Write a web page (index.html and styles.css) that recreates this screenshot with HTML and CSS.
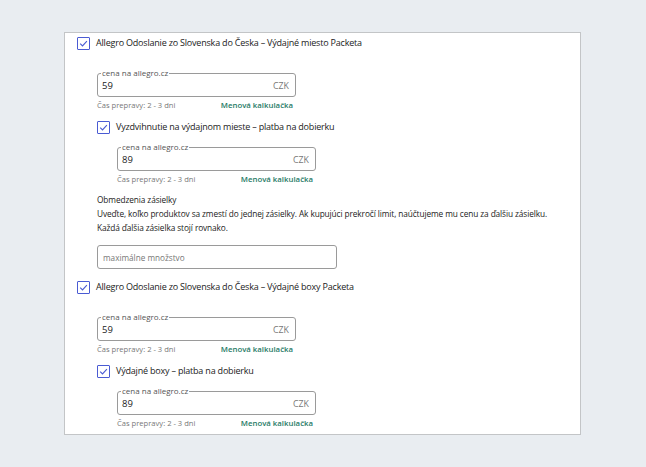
FILE: index.html
```html
<!DOCTYPE html>
<html lang="sk">
<head>
  <meta charset="UTF-8" />
  <title>Doprava</title>
  <link rel="stylesheet" href="styles.css">
</head>
<body>
  <div class="card">

    <label class="option">
      <span class="check"><svg viewBox="0 0 11 11"><path d="M2.2 5.6 L4.5 7.9 L8.9 3.1" /></svg></span>
      Allegro Odoslanie zo Slovenska do Česka – Výdajné miesto Packeta
    </label>
    <div class="indent">
      <div class="price first">
        <span class="legend">cena na allegro.cz</span>
        <span class="value">59</span>
        <span class="currency">CZK</span>
      </div>
      <div class="hint">
        <span>Čas prepravy: 2 - 3 dni</span>
        <a href="#">Menová kalkulačka</a>
      </div>

      <label class="option sub">
        <span class="check"><svg viewBox="0 0 11 11"><path d="M2.2 5.6 L4.5 7.9 L8.9 3.1" /></svg></span>
        Vyzdvihnutie na výdajnom mieste – platba na dobierku
      </label>
      <div class="indent">
        <div class="price">
          <span class="legend">cena na allegro.cz</span>
          <span class="value">89</span>
          <span class="currency">CZK</span>
        </div>
        <div class="hint">
          <span>Čas prepravy: 2 - 3 dni</span>
          <a href="#">Menová kalkulačka</a>
        </div>
      </div>

      <div class="limits">
        <p>Obmedzenia zásielky</p>
        <p>Uveďte, koľko produktov sa zmestí do jednej zásielky. Ak kupujúci prekročí limit, naúčtujeme mu cenu za ďalšiu zásielku.</p>
        <p>Každá ďalšia zásielka stojí rovnako.</p>
      </div>
      <input class="amount" type="text" placeholder="maximálne množstvo" />
    </div>

    <label class="option top-gap">
      <span class="check"><svg viewBox="0 0 11 11"><path d="M2.2 5.6 L4.5 7.9 L8.9 3.1" /></svg></span>
      Allegro Odoslanie zo Slovenska do Česka – Výdajné boxy Packeta
    </label>
    <div class="indent">
      <div class="price first">
        <span class="legend">cena na allegro.cz</span>
        <span class="value">59</span>
        <span class="currency">CZK</span>
      </div>
      <div class="hint">
        <span>Čas prepravy: 2 - 3 dni</span>
        <a href="#">Menová kalkulačka</a>
      </div>

      <label class="option sub">
        <span class="check"><svg viewBox="0 0 11 11"><path d="M2.2 5.6 L4.5 7.9 L8.9 3.1" /></svg></span>
        Výdajné boxy – platba na dobierku
      </label>
      <div class="indent">
        <div class="price">
          <span class="legend">cena na allegro.cz</span>
          <span class="value">89</span>
          <span class="currency">CZK</span>
        </div>
        <div class="hint">
          <span>Čas prepravy: 2 - 3 dni</span>
          <a href="#">Menová kalkulačka</a>
        </div>
      </div>
    </div>

  </div>
</body>
</html>
```

FILE: styles.css
```css
body {
  margin: 0;
  padding: 32px 0 0 64px;
  background-color: #e9edf1;
  font-family: 'Open Sans', sans-serif;
  color: #222;
  overflow: hidden;
}
.card {
  width: 503px;
  height: 398px;
  padding: 3px 0 0 12px;
  background-color: #fff;
  border: 1px solid #c3c5c7;
  overflow: hidden;
}
.option {
  display: flex;
  align-items: center;
  gap: 6px;
  height: 14px;
  font-size: 9px;
  letter-spacing: -0.2px;
  line-height: 14px;
  color: #222;
}
.check {
  width: 11px;
  height: 11px;
  border: 1px solid #4a5bd3;
  border-radius: 1px;
  flex: none;
}
.check svg {
  display: block;
  width: 11px;
  height: 11px;
}
.check path {
  fill: none;
  stroke: #4a5bd3;
  stroke-width: 1.1;
}
.indent {
  padding-left: 20px;
}
.price {
  position: relative;
  display: flex;
  align-items: center;
  justify-content: space-between;
  width: 199px;
  height: 24px;
  box-sizing: border-box;
  margin-top: 13px;
  padding: 1px 6px 0 4px;
  border: 1px solid #9a9a9a;
  border-radius: 3px;
}
.price.first {
  margin-top: 23px;
}
.legend {
  position: absolute;
  top: -6px;
  left: 3px;
  padding: 0 1px;
  background-color: #fff;
  font-size: 8px;
  line-height: 10px;
  color: #555;
}
.value {
  font-size: 9.5px;
  color: #222;
}
.currency {
  font-size: 8.8px;
  color: #777;
}
.hint {
  display: flex;
  justify-content: space-between;
  align-items: baseline;
  width: 196px;
  margin-top: 3px;
  font-size: 7.6px;
  line-height: 10px;
  color: #777;
}
.hint a {
  font-size: 7.8px;
  color: #1f7a66;
  font-weight: 600;
  text-decoration: none;
}
.option.sub {
  margin-top: 10px;
}
.limits {
  margin-top: 9px;
  font-size: 8.3px;
  letter-spacing: -0.1px;
  line-height: 14px;
  color: #222;
}
.limits p {
  margin: 0;
}
.amount {
  display: block;
  width: 240px;
  height: 24px;
  box-sizing: border-box;
  margin: 10px 0 0 0;
  padding: 0 5px;
  border: 1px solid #9a9a9a;
  border-radius: 3px;
  font-family: 'Open Sans', sans-serif;
  font-size: 8.2px;
}
.amount::placeholder {
  color: #777;
}
.option.top-gap {
  margin-top: 11px;
}
```
